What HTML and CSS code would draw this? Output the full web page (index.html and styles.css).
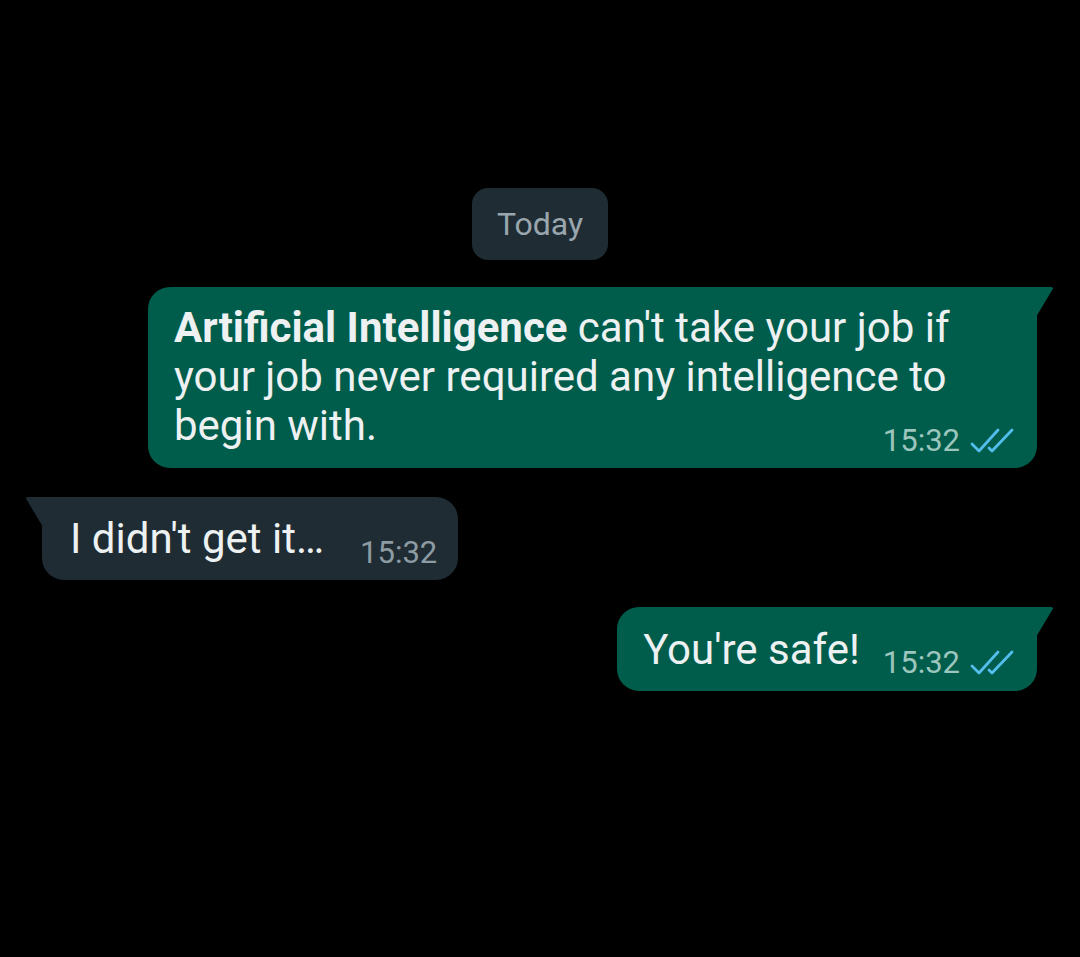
FILE: index.html
```html
<!DOCTYPE html>
<html lang="en">
<head>
<meta charset="utf-8">
<title>Chat</title>
<link rel="stylesheet" href="styles.css">
</head>
<body>
<main class="chat">
  <div class="day">Today</div>

  <div class="msg out first">
    <svg class="tail" width="18" height="30" viewBox="0 0 18 30"><path d="M0 0 H15 Q18 0 16.5 2.5 L0 30 Z" fill="#005c4b"/></svg>
    <p class="text"><b>Artificial Intelligence</b> can't take your job if your job never required any intelligence to begin with.</p>
    <div class="meta">
      <span class="time">15:32</span>
      <svg class="ticks" width="44" height="26" viewBox="0 0 44 26"><path d="M2 16 L9 23 L28 2 M19 20 L22 23 L42 2" fill="none" stroke="#53bdeb" stroke-width="2.8" stroke-linecap="round" stroke-linejoin="round"/></svg>
    </div>
  </div>

  <div class="msg in">
    <svg class="tail" width="18" height="30" viewBox="0 0 18 30"><path d="M18 0 H3 Q0 0 1.5 2.5 L18 30 Z" fill="#1f2c34"/></svg>
    <p class="text">I didn't get it…</p>
    <span class="time">15:32</span>
  </div>

  <div class="msg out single">
    <svg class="tail" width="18" height="30" viewBox="0 0 18 30"><path d="M0 0 H15 Q18 0 16.5 2.5 L0 30 Z" fill="#005c4b"/></svg>
    <p class="text">You're safe!</p>
    <div class="meta">
      <span class="time">15:32</span>
      <svg class="ticks" width="44" height="26" viewBox="0 0 44 26"><path d="M2 16 L9 23 L28 2 M19 20 L22 23 L42 2" fill="none" stroke="#53bdeb" stroke-width="2.8" stroke-linecap="round" stroke-linejoin="round"/></svg>
    </div>
  </div>
</main>
</body>
</html>
```

FILE: styles.css
```css
html, body {
  margin: 0;
  padding: 0;
  background: #000;
  height: 100%;
}

body {
  font-family: Roboto, "Liberation Sans", sans-serif;
  color: #edf1f2;
}

.chat {
  display: flex;
  flex-direction: column;
  padding-top: 188px;
}

.day {
  align-self: center;
  height: 72px;
  box-sizing: border-box;
  padding: 0 25px;
  display: flex;
  align-items: center;
  background: #1f2c34;
  border-radius: 16px;
  color: #9aa6ad;
  font-size: 32px;
}

.msg {
  position: relative;
  border-radius: 22px;
}

.msg .text {
  margin: 0;
  font-size: 42px;
  line-height: 49px;
}

.msg .text b {
  font-weight: 700;
}

.msg .tail {
  position: absolute;
  top: 0;
}

.out {
  align-self: flex-end;
  margin-right: 43px;
  background: #005c4b;
  border-top-right-radius: 0;
}

.out .tail {
  right: -17px;
}

.in {
  align-self: flex-start;
  margin-left: 42px;
  margin-top: 29px;
  background: #1f2c34;
  border-top-left-radius: 0;
  display: flex;
  align-items: center;
  gap: 36px;
  height: 83px;
  padding: 0 21px 0 28px;
}

.in .tail {
  left: -17px;
}

.in .time {
  color: #8d9ba3;
  margin-top: 28px;
}

.time {
  font-size: 31px;
  line-height: 30px;
}

.out .time {
  color: #9cc6bd;
}

.meta {
  display: flex;
  align-items: center;
  gap: 10px;
}

.ticks {
  display: block;
}

.first {
  width: 889px;
  box-sizing: border-box;
  margin-top: 27px;
  padding: 16px 23px 12px 26px;
}

.first .meta {
  justify-content: flex-end;
  margin-top: -24px;
}

.single {
  margin-top: 27px;
  display: flex;
  align-items: center;
  gap: 23px;
  height: 84px;
  padding: 0 23px 0 26px;
}

.single .meta {
  margin-top: 28px;
}
```
